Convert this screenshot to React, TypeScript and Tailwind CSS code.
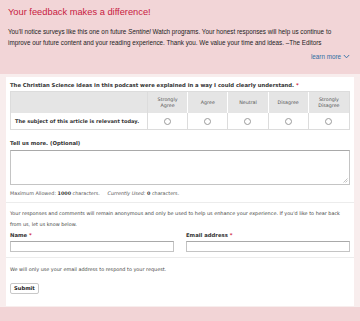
import React from "react";

const Radio = () => (
  <span className="inline-block w-[7px] h-[7px] rounded-full border border-[#9a9a9a] bg-white" />
);

export default function App() {
  const cols = ["Strongly Agree", "Agree", "Neutral", "Disagree", "Strongly Disagree"];
  return (
    <div className="w-[360px] h-[321px] bg-[#f2d4d6] overflow-hidden" style={{ fontFamily: '"Liberation Sans", Arial, sans-serif' }}>
      <div className="h-[74px] px-[8px] pt-[5px] bg-[#f2d5d7]">
        <div className="text-[9.3px] leading-[14px] text-[#c8203f]">Your feedback makes a difference!</div>
        <div className="mt-[7px] text-[6.3px] leading-[11px] text-[#222]">
          You'll notice surveys like this one on future <i>Sentinel</i> Watch programs. Your honest responses will help us continue to improve our future content and your reading experience. Thank you. We value your time and ideas. –The Editors
        </div>
        <div className="mt-[4px] flex justify-end items-center gap-[2px] text-[6.3px] text-[#2d6da3] pr-[2px]">
          learn more
          <svg width="7" height="5" viewBox="0 0 7 5"><path d="M0.8 1 L3.5 3.8 L6.2 1" stroke="#2d6da3" strokeWidth="0.9" fill="none" /></svg>
        </div>
      </div>
      <div className="bg-[#f8eded] px-[6px] pt-[3px] pb-[1px]">
        <div className="bg-white h-[229px] px-[4px] pt-[3px] text-[#333]" style={{ fontFamily: '"DejaVu Sans", Verdana, sans-serif' }}>
          <div className="text-[5.3px] leading-[10px] font-bold">
            The Christian Science ideas in this podcast were explained in a way I could clearly understand. <span className="text-[#d0293f]">*</span>
          </div>
          <div className="mt-[1px] border border-[#dcdcdc] grid grid-cols-[137px_repeat(5,1fr)] text-[4.8px] leading-[6px] text-[#555]">
            <div className="bg-[#e5e5e5] h-[21px] border-r border-[#dcdcdc]" />
            {cols.map((c, i) => (
              <div key={c} className={`bg-[#e5e5e5] h-[21px] flex items-center justify-center text-center px-[6px] ${i < 4 ? "border-r border-white" : ""}`}>{c}</div>
            ))}
            <div className="h-[16px] flex items-center pl-[4px] font-bold text-[5.05px] text-[#333] border-r border-[#dcdcdc]">The subject of this article is relevant today.</div>
            {cols.map((c, i) => (
              <div key={c} className={`h-[16px] flex items-center justify-center ${i < 4 ? "border-r border-[#dcdcdc]" : ""}`}><Radio /></div>
            ))}
          </div>
          <div className="mt-[9px] text-[5.3px] leading-[8px] font-bold">Tell us more. (Optional)</div>
          <div className="relative mt-[3px] h-[35px] border border-[#c4c4c4] border-t-[#a9a9a9]">
            <svg className="absolute right-[1px] bottom-[1px]" width="5" height="5" viewBox="0 0 5 5"><path d="M0.5 4.5 L4.5 0.5 M2.5 4.5 L4.5 2.5" stroke="#999" strokeWidth="0.6" /></svg>
          </div>
          <div className="mt-[5px] text-[4.85px] leading-[6px] text-[#555]">
            Maximum Allowed: <b className="text-[#333]">1000</b> characters.&nbsp;&nbsp;&nbsp;&nbsp; <i>Currently Used:</i> <b className="text-[#333]">0</b> characters.
          </div>
          <div className="mt-[6px] -mx-[4px] border-t border-[#ececec]" />
          <div className="mt-[5px] text-[4.9px] leading-[11px] text-[#444]">
            Your responses and comments will remain anonymous and only be used to help us enhance your experience. If you'd like to hear back from us, let us know below.
          </div>
          <div className="mt-[1px] grid grid-cols-2 gap-[12px]">
            <div>
              <div className="text-[5.3px] leading-[8px] font-bold">Name <span className="text-[#d0293f]">*</span></div>
              <div className="mt-[2px] h-[11px] border border-[#c4c4c4] border-t-[#a9a9a9]" />
            </div>
            <div>
              <div className="text-[5.3px] leading-[8px] font-bold">Email address <span className="text-[#d0293f]">*</span></div>
              <div className="mt-[2px] h-[11px] border border-[#c4c4c4] border-t-[#a9a9a9]" />
            </div>
          </div>
          <div className="mt-[5px] -mx-[4px] border-t border-[#ececec]" />
          <div className="mt-[7px] text-[4.9px] leading-[8px] text-[#444]">We will only use your email address to respond to your request.</div>
          <div className="mt-[5px] inline-flex items-center h-[11px] px-[3px] border border-[#c8c8c8] rounded-[2px] text-[5.2px] font-bold text-[#222]">Submit</div>
        </div>
      </div>
    </div>
  );
}
